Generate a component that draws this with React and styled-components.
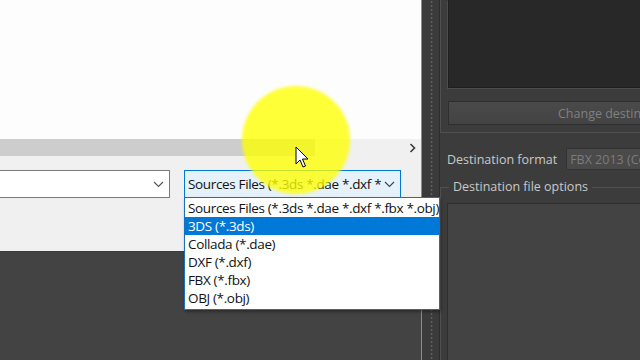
import styled, { createGlobalStyle } from 'styled-components';

const GlobalStyle = createGlobalStyle`
  html, body {
    margin: 0;
    padding: 0;
    background: #434343;
  }
  body {
    font-family: 'Open Sans', 'Noto Sans', sans-serif;
  }
`;

const fileTypes = [
  'Sources Files (*.3ds *.dae *.dxf *.fbx *.obj)',
  '3DS (*.3ds)',
  'Collada (*.dae)',
  'DXF (*.dxf)',
  'FBX (*.fbx)',
  'OBJ (*.obj)',
];

function Chevron({ color = '#444' }) {
  return (
    <svg width="11" height="7" viewBox="0 0 11 7">
      <path d="M1 1l4.5 4.5L10 1" fill="none" stroke={color} strokeWidth="1.1" />
    </svg>
  );
}

export default function App() {
  return (
    <>
      <GlobalStyle />
      <Screen>
        <LeftColumn>
          <Dialog>
            <FileList />
            <HScroll>
              <ScrollThumb />
              <ScrollTrack>
                <ScrollArrow>
                  <svg width="7" height="10" viewBox="0 0 7 10">
                    <path d="M1.5 1l4 4-4 4" fill="none" stroke="#3a3a3a" strokeWidth="1.6" />
                  </svg>
                </ScrollArrow>
              </ScrollTrack>
            </HScroll>
            <Footer>
              <FileNameCombo>
                <Chevron color="#555" />
              </FileNameCombo>
              <TypeWrap>
                <TypeCombo>
                  <TypeText>Sources Files (*.3ds *.dae *.dxf *</TypeText>
                  <Chevron color="#444" />
                </TypeCombo>
                <DropList>
                  {fileTypes.map((t, i) => (
                    <DropItem key={t} selected={i === 1}>
                      {t}
                    </DropItem>
                  ))}
                </DropList>
              </TypeWrap>
            </Footer>
          </Dialog>
        </LeftColumn>

        <Splitter>
          <Grip />
        </Splitter>

        <Panel>
          <TopGroup>
            <PreviewBox />
            <DisabledButton>Change destination folder</DisabledButton>
          </TopGroup>
          <FormatRow>
            <Label>Destination format</Label>
            <DarkCombo>FBX 2013 (Compatible)</DarkCombo>
          </FormatRow>
          <OptionsGroup>
            <Legend>Destination file options</Legend>
            <OptionsInner />
          </OptionsGroup>
        </Panel>

        <Highlight />
        <Cursor>
          <svg width="14" height="22" viewBox="0 0 14 22">
            <path
              d="M1 1v17l4-4 3 7 2.5-1-3-7h5.5z"
              fill="#fff"
              stroke="#000"
              strokeWidth="1"
              strokeLinejoin="round"
            />
          </svg>
        </Cursor>
      </Screen>
    </>
  );
}

const Screen = styled.div`
  position: relative;
  width: 640px;
  height: 360px;
  overflow: hidden;
  display: flex;
  background: #434343;
`;

const LeftColumn = styled.div`
  width: 421px;
  flex-shrink: 0;
  display: flex;
  flex-direction: column;
`;

const Dialog = styled.div`
  display: flex;
  flex-direction: column;
  height: 252px;
  background: #f0f0f0;
  border-bottom: 1px solid #3a3a3a;
  box-sizing: border-box;
`;

const FileList = styled.div`
  height: 139px;
  background: #fdfdfd;
`;

const HScroll = styled.div`
  display: flex;
  height: 17px;
`;

const ScrollThumb = styled.div`
  width: 315px;
  background: #cdcdcd;
`;

const ScrollTrack = styled.div`
  flex: 1;
  display: flex;
  justify-content: flex-end;
  align-items: center;
  background: #f0f0f0;
`;

const ScrollArrow = styled.div`
  width: 17px;
  display: flex;
  justify-content: center;
  align-items: center;
`;

const Footer = styled.div`
  flex: 1;
  display: flex;
  gap: 14px;
  padding-top: 14px;
  margin-left: -1px;
`;

const FileNameCombo = styled.div`
  width: 171px;
  height: 28px;
  box-sizing: border-box;
  border: 1px solid #7a7a7a;
  background: #fff;
  display: flex;
  justify-content: flex-end;
  align-items: center;
  padding-right: 5px;
`;

const TypeWrap = styled.div`
  position: relative;
  z-index: 2;
`;

const TypeCombo = styled.div`
  width: 217px;
  height: 28px;
  box-sizing: border-box;
  border: 1px solid #0078d7;
  background: #e5f1fb;
  display: flex;
  align-items: center;
  justify-content: space-between;
  padding: 0 5px 0 3px;
  font-family: 'Open Sans', sans-serif;
  font-size: 13.5px;
  letter-spacing: -0.35px;
  color: #111;
`;

const TypeText = styled.span`
  white-space: nowrap;
  overflow: hidden;
`;

const DropList = styled.div`
  position: absolute;
  left: 0;
  top: 27px;
  width: 256px;
  box-sizing: border-box;
  border: 1px solid #1a6fbf;
  background: #fff;
  padding: 1px 0 2px;
  box-shadow: 1px 2px 3px rgba(0, 0, 0, 0.35);
`;

const DropItem = styled.div`
  height: 18px;
  line-height: 18px;
  padding-left: 3px;
  font-family: 'Open Sans', sans-serif;
  font-size: 13.5px;
  letter-spacing: -0.35px;
  white-space: nowrap;
  color: ${({ selected }) => (selected ? '#fff' : '#111')};
  background: ${({ selected }) => (selected ? '#0078d7' : 'transparent')};
`;

const Splitter = styled.div`
  width: 19px;
  flex-shrink: 0;
  box-sizing: border-box;
  background: #3b3b3b;
  border-left: 1px solid #6e94b8;
  border-right: 1px solid #2c2c2c;
  display: flex;
  justify-content: center;
  padding-left: 1px;
`;

const Grip = styled.div`
  width: 3px;
  height: 100%;
  background-image: radial-gradient(circle, #5e5e5e 0.9px, transparent 1.2px);
  background-size: 3px 4px;
`;

const Panel = styled.div`
  flex: 1;
  display: flex;
  flex-direction: column;
  background: #3c3c3c;
  color: #c8c8c8;
  font-family: 'Open Sans', sans-serif;
  font-size: 12.5px;
`;

const TopGroup = styled.div`
  height: 133px;
  box-sizing: border-box;
  border-left: 1px solid #505050;
  border-bottom: 1px solid #505050;
  padding: 0 0 0 7px;
  display: flex;
  flex-direction: column;
  gap: 13px;
`;

const PreviewBox = styled.div`
  height: 88px;
  box-sizing: border-box;
  background: #282828;
  border: 1px solid #1e1e1e;
  border-top: none;
  border-right: none;
  box-shadow: -1px 1px 0 #4c4c4c;
`;

const DisabledButton = styled.div`
  height: 24px;
  box-sizing: border-box;
  border: 1px solid #2e2e2e;
  border-right: none;
  background: linear-gradient(#4a4a4a, #434343);
  color: #808080;
  display: flex;
  align-items: center;
  padding-left: 109px;
  white-space: nowrap;
  overflow: hidden;
`;

const FormatRow = styled.div`
  display: flex;
  align-items: center;
  margin-top: 15px;
  padding-left: 7px;
  gap: 9px;
  height: 22px;
`;

const Label = styled.span`
  white-space: nowrap;
  color: #c9c9c9;
`;

const DarkCombo = styled.div`
  flex: 1;
  height: 22px;
  box-sizing: border-box;
  background: #4a4a4a;
  border: 1px solid #333;
  border-right: none;
  color: #7c7c7c;
  display: flex;
  align-items: center;
  padding-left: 3px;
  white-space: nowrap;
  overflow: hidden;
`;

const OptionsGroup = styled.div`
  position: relative;
  flex: 1;
  margin-top: 17px;
  border-left: 1px solid #505050;
  border-top: 1px solid #505050;
  padding: 15px 0 0 6px;
  display: flex;
  flex-direction: column;
`;

const Legend = styled.span`
  position: absolute;
  top: -10px;
  left: 8px;
  padding: 0 4px;
  background: #3c3c3c;
  color: #c9c9c9;
  white-space: nowrap;
`;

const OptionsInner = styled.div`
  flex: 1;
  background: #434343;
  border-left: 1px solid #2e2e2e;
  border-top: 1px solid #2e2e2e;
`;

const Highlight = styled.div`
  position: absolute;
  left: 242px;
  top: 86px;
  width: 108px;
  height: 108px;
  border-radius: 50%;
  background: rgba(255, 255, 0, 0.78);
  filter: blur(1.5px);
  pointer-events: none;
  z-index: 5;
`;

const Cursor = styled.div`
  position: absolute;
  left: 295px;
  top: 146px;
  z-index: 6;
  line-height: 0;
`;
